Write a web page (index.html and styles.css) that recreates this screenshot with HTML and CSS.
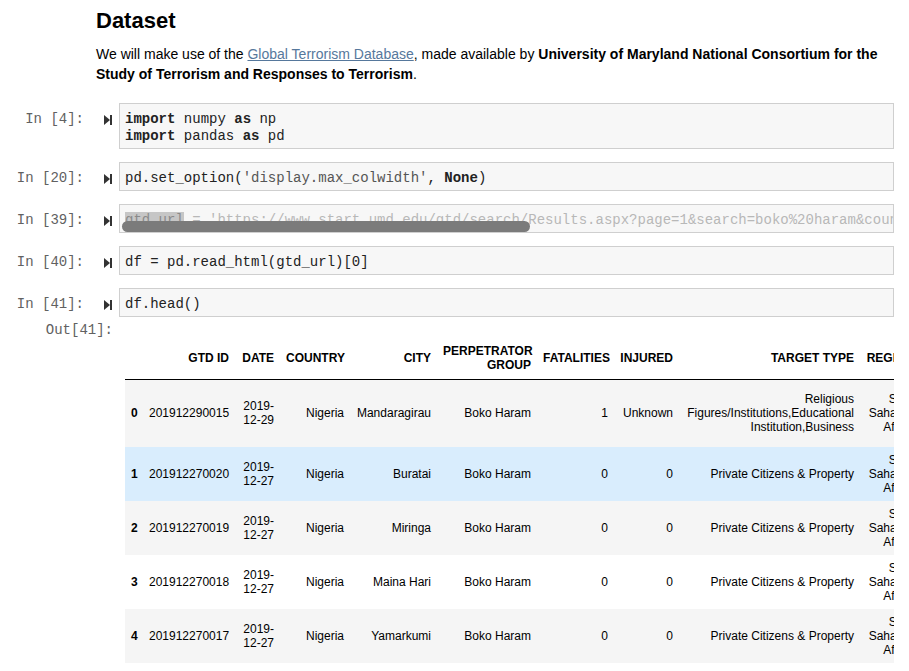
FILE: index.html
```html
<!DOCTYPE html>
<html>
<head>
<meta charset="utf-8">
<title>Dataset</title>
<link rel="stylesheet" href="styles.css">
</head>
<body>
<div class="nb">
  <div class="md">
    <h2 class="title">Dataset</h2>
    <p class="text">We will make use of the <a href="#" class="link">Global Terrorism Database</a>, made available by <b>University of Maryland National Consortium for the Study of Terrorism and Responses to Terrorism</b>.</p>
  </div>

  <div class="cell first">
    <div class="prompt">In [4]:</div>
    <div class="run"><svg width="8" height="10" viewBox="0 0 8 10"><polygon points="0,0 6,5 0,10" fill="#333"/><rect x="6" y="0" width="2" height="10" fill="#333"/></svg></div>
    <div class="input"><pre class="code"><span class="kw">import</span> numpy <span class="kw">as</span> np
<span class="kw">import</span> pandas <span class="kw">as</span> pd</pre></div>
  </div>

  <div class="cell">
    <div class="prompt">In [20]:</div>
    <div class="run"><svg width="8" height="10" viewBox="0 0 8 10"><polygon points="0,0 6,5 0,10" fill="#333"/><rect x="6" y="0" width="2" height="10" fill="#333"/></svg></div>
    <div class="input"><pre class="code">pd.set_option(<span class="str">'display.max_colwidth'</span>, <span class="kw">None</span>)</pre></div>
  </div>

  <div class="cell">
    <div class="prompt">In [39]:</div>
    <div class="run"><svg width="8" height="10" viewBox="0 0 8 10"><polygon points="0,0 6,5 0,10" fill="#333"/><rect x="6" y="0" width="2" height="10" fill="#333"/></svg></div>
    <div class="input redacted"><pre class="code faded"><span class="hl">gtd_url</span> = 'https://www.start.umd.edu/gtd/search/Results.aspx?page=1&amp;search=boko%20haram&amp;count=100'</pre><span class="bar"></span></div>
  </div>

  <div class="cell">
    <div class="prompt">In [40]:</div>
    <div class="run"><svg width="8" height="10" viewBox="0 0 8 10"><polygon points="0,0 6,5 0,10" fill="#333"/><rect x="6" y="0" width="2" height="10" fill="#333"/></svg></div>
    <div class="input"><pre class="code">df = pd.read_html(gtd_url)[0]</pre></div>
  </div>

  <div class="cell last">
    <div class="prompt">In [41]:</div>
    <div class="run"><svg width="8" height="10" viewBox="0 0 8 10"><polygon points="0,0 6,5 0,10" fill="#333"/><rect x="6" y="0" width="2" height="10" fill="#333"/></svg></div>
    <div class="input"><pre class="code">df.head()</pre></div>
  </div>

  <div class="out">
    <div class="out-prompt">Out[41]:</div>
    <div class="output">
      <table class="df">
        <colgroup>
          <col class="c-idx"><col class="c-id"><col class="c-date"><col class="c-country"><col class="c-city"><col class="c-perp"><col class="c-fat"><col class="c-inj"><col class="c-target"><col class="c-region">
        </colgroup>
        <thead>
          <tr><th></th><th>GTD ID</th><th>DATE</th><th>COUNTRY</th><th>CITY</th><th>PERPETRATOR GROUP</th><th>FATALITIES</th><th>INJURED</th><th>TARGET TYPE</th><th>REGION</th></tr>
        </thead>
        <tbody>
          <tr class="tall"><th>0</th><td>201912290015</td><td>2019-12-29</td><td>Nigeria</td><td>Mandaragirau</td><td>Boko Haram</td><td>1</td><td>Unknown</td><td>Religious Figures/Institutions,Educational Institution,Business</td><td>Sub-Saharan Africa</td></tr>
          <tr class="hover"><th>1</th><td>201912270020</td><td>2019-12-27</td><td>Nigeria</td><td>Buratai</td><td>Boko Haram</td><td>0</td><td>0</td><td>Private Citizens &amp; Property</td><td>Sub-Saharan Africa</td></tr>
          <tr><th>2</th><td>201912270019</td><td>2019-12-27</td><td>Nigeria</td><td>Miringa</td><td>Boko Haram</td><td>0</td><td>0</td><td>Private Citizens &amp; Property</td><td>Sub-Saharan Africa</td></tr>
          <tr><th>3</th><td>201912270018</td><td>2019-12-27</td><td>Nigeria</td><td>Maina Hari</td><td>Boko Haram</td><td>0</td><td>0</td><td>Private Citizens &amp; Property</td><td>Sub-Saharan Africa</td></tr>
          <tr><th>4</th><td>201912270017</td><td>2019-12-27</td><td>Nigeria</td><td>Yamarkumi</td><td>Boko Haram</td><td>0</td><td>0</td><td>Private Citizens &amp; Property</td><td>Sub-Saharan Africa</td></tr>
        </tbody>
      </table>
    </div>
  </div>
</div>
</body>
</html>
```

FILE: styles.css
```css
html, body {
  margin: 0;
  padding: 0;
  background: #fff;
}
body {
  width: 909px;
  height: 671px;
  overflow: hidden;
  font-family: "Liberation Sans", Arial, sans-serif;
  color: #000;
}
.nb {
  padding-top: 8px;
}
.md {
  margin-left: 96px;
  width: 798px;
}
.title {
  margin: 0;
  font-size: 22px;
  line-height: 26px;
  font-weight: bold;
}
.text {
  margin: 10px 0 0;
  font-size: 14px;
  line-height: 20px;
}
.link {
  color: #56789c;
  text-decoration: underline;
}
.cell {
  display: flex;
  margin-top: 13px;
}
.cell.first {
  margin-top: 19px;
}
.prompt {
  flex: none;
  width: 84px;
  padding-top: 8px;
  text-align: right;
  font-family: "Liberation Mono", "Courier New", monospace;
  font-size: 14px;
  line-height: 17px;
  color: #616161;
  white-space: pre;
}
.run {
  flex: none;
  width: 35px;
  padding-top: 12px;
  box-sizing: border-box;
  padding-left: 20px;
}
.run svg {
  display: block;
}
.input {
  flex: none;
  width: 775px;
  box-sizing: border-box;
  border: 1px solid #cfcfcf;
  background: #f7f7f7;
  padding: 7px 0 3px 5px;
  overflow: hidden;
}
.code {
  margin: 0;
  font-family: "Liberation Mono", "Courier New", monospace;
  font-size: 14px;
  line-height: 17px;
  color: #222;
  white-space: pre;
}
.kw {
  font-weight: bold;
  color: #222;
}
.str {
  color: #555;
}
.redacted {
  position: relative;
}
.faded {
  color: #b8b8b8;
}
.hl {
  background: #c6c6c6;
  color: #8a8a8a;
}
.bar {
  position: absolute;
  left: 2px;
  top: 16px;
  width: 408px;
  height: 11px;
  border-radius: 6px;
  background: #7b7b7b;
}
.out {
  display: flex;
}
.out-prompt {
  flex: none;
  width: 113px;
  padding-right: 6px;
  padding-top: 5px;
  text-align: right;
  font-family: "Liberation Mono", "Courier New", monospace;
  font-size: 14px;
  line-height: 17px;
  color: #616161;
}
.output {
  flex: none;
  width: 775px;
  box-sizing: border-box;
  padding: 16px 0 0 6px;
  overflow: hidden;
}
.df {
  border-collapse: collapse;
  border-spacing: 0;
  table-layout: fixed;
  width: 795px;
  font-size: 12px;
  line-height: 14px;
  color: #000;
}
.c-idx { width: 18px; }
.c-id { width: 92px; }
.c-date { width: 45px; }
.c-country { width: 70px; }
.c-city { width: 87px; }
.c-perp { width: 100px; }
.c-fat { width: 77px; }
.c-inj { width: 65px; }
.c-target { width: 181px; }
.c-region { width: 60px; }
.df th,
.df td {
  padding: 6px;
  text-align: right;
  vertical-align: middle;
}
.df th {
  font-weight: bold;
}
.df thead tr {
  height: 46px;
}
.df thead th {
  padding-top: 9px;
  padding-bottom: 5px;
  border-bottom: 1px solid #000;
}
.df tbody tr {
  height: 54px;
}
.df tbody tr.tall {
  height: 68px;
}
.df tbody tr:nth-child(odd) {
  background: #f5f5f5;
}
.df tbody tr.hover {
  background: #d9edfd;
}
```
